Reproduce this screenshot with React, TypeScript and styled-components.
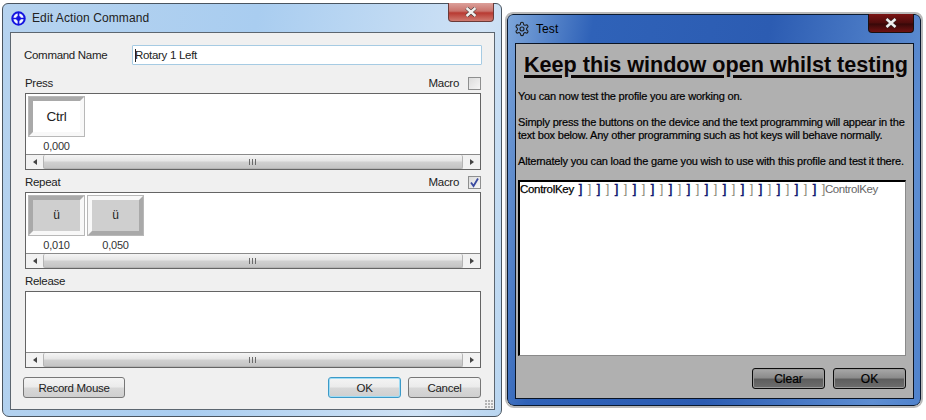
import React from "react";
import styled, { createGlobalStyle } from "styled-components";

const Global = createGlobalStyle`
  html, body { margin: 0; padding: 0; background: #fff; }
  body { width: 926px; height: 420px; overflow: hidden; font-family: "Liberation Sans", Arial, sans-serif; }
`;

const Page = styled.div`
  display: flex;
  align-items: flex-start;
  width: 926px;
  height: 420px;
  padding: 3px 0 0 2px;
  box-sizing: border-box;
`;

const Dialog = styled.div`
  width: 500px;
  height: 414px;
  box-sizing: border-box;
  display: flex;
  flex-direction: column;
  padding: 0 6px 6px 7px;
  border: 1px solid #4a5560;
  border-radius: 6px 6px 7px 7px;
  background: linear-gradient(100deg, #b6d3ef 0%, #a9cdf0 45%, #cfe2f5 85%, #b8d5f0 100%);
`;

const TitleBar = styled.div<{ $dark?: boolean }>`
  height: 28px;
  flex: none;
  display: flex;
  align-items: center;
  gap: 6px;
  position: relative;
  margin-left: ${(p) => (p.$dark ? "-1px" : "1px")};
  font-size: 12px;
  letter-spacing: 0.1px;
  color: ${(p) => (p.$dark ? "#000" : "#222")};
`;

const CloseBtn = styled.div<{ $dark?: boolean }>`
  position: absolute;
  right: ${(p) => (p.$dark ? "0" : "1px")};
  top: -1px;
  width: 46px;
  height: 19px;
  border: 1px solid ${(p) => (p.$dark ? "#1a1010" : "#6b3a38")};
  border-top: none;
  border-radius: 0 0 4px 4px;
  box-sizing: border-box;
  display: flex;
  align-items: center;
  justify-content: center;
  background: ${(p) =>
    p.$dark
      ? "linear-gradient(#7a1414 0%, #4e0c0c 50%, #360808 55%, #701212 100%)"
      : "linear-gradient(#dca09a 0%, #c9736c 45%, #b83a32 55%, #cf7a70 100%)"};
`;

const Panel = styled.div`
  flex: 1;
  display: flex;
  flex-direction: column;
  box-sizing: border-box;
  background: #f0f0f0;
  border: 1px solid #5c6670;
  padding: 12px 12px 0 13px;
  font-size: 11.5px;
  letter-spacing: -0.3px;
  color: #222;
`;

const NameRow = styled.div`
  display: flex;
  align-items: center;
  height: 20px;
`;

const NameLabel = styled.span`
  width: 108px;
  flex: none;
`;

const NameInput = styled.div`
  flex: 1;
  height: 20px;
  box-sizing: border-box;
  background: #fff;
  border: 1px solid #a6cbe3;
  border-radius: 1px;
  padding-left: 2px;
  display: flex;
  align-items: center;
`;

const Caret = styled.span`
  width: 1px;
  height: 13px;
  margin-right: -1px;
  background: #222;
  flex: none;
`;

const SectionHead = styled.div<{ $top: number }>`
  display: flex;
  align-items: center;
  justify-content: space-between;
  height: 16px;
  margin: ${(p) => p.$top}px 1px 0 1px;
`;

const MacroWrap = styled.div`
  display: flex;
  align-items: center;
  gap: 9px;
`;

const CheckBox = styled.div`
  width: 13px;
  height: 13px;
  box-sizing: border-box;
  border: 1px solid #8e8f8f;
  background: linear-gradient(135deg, #dcdcdc, #f6f6f6);
  display: flex;
  align-items: center;
  justify-content: center;
`;

const ListBox = styled.div`
  height: 77px;
  flex: none;
  box-sizing: border-box;
  margin: 2px 1px 0 1px;
  border: 1px solid #646464;
  background: #fff;
  display: flex;
  flex-direction: column;
`;

const Tiles = styled.div`
  flex: 1;
  display: flex;
  gap: 2px;
  padding: 2px 0 0 2px;
  min-height: 0;
`;

const TileCol = styled.div`
  display: flex;
  flex-direction: column;
  align-items: center;
  width: 57px;
  font-size: 11px;
  letter-spacing: -0.2px;
  line-height: 19px;
  color: #333;
`;

const Tile = styled.div<{ $gray?: boolean; $raised?: boolean }>`
  width: 57px;
  height: 41px;
  flex: none;
  box-sizing: border-box;
  border-style: solid;
  border-width: 5px;
  border-color: ${(p) =>
    p.$raised ? "#f8f8f8 #a9a9a9 #a9a9a9 #f8f8f8" : "#a9a9a9 #f8f8f8 #f8f8f8 #a9a9a9"};
  outline: 1px solid #b8b8b8;
  outline-offset: -1px;
  background: ${(p) => (p.$gray ? "#cfcfcf" : "#fff")};
  display: flex;
  align-items: center;
  justify-content: center;
  font-size: ${(p) => (p.$gray ? "12px" : "13.5px")};
  color: #222;
`;

const ScrollBar = styled.div`
  height: 14px;
  flex: none;
  display: flex;
  align-items: stretch;
  background: #f0f0f0;
  border-top: 1px solid #8a8a8a;
`;

const ScrollEnd = styled.div`
  width: 17px;
  flex: none;
  display: flex;
  align-items: center;
  justify-content: center;
  background: #f2f2f2;
`;

const Arrow = styled.span<{ $right?: boolean }>`
  width: 0;
  height: 0;
  border-top: 3.5px solid transparent;
  border-bottom: 3.5px solid transparent;
  ${(p) => (p.$right ? "border-left: 4px solid #444;" : "border-right: 4px solid #444;")}
`;

const Thumb = styled.div`
  flex: 1;
  box-sizing: border-box;
  border: 1px solid #b4b4b4;
  border-top: none;
  border-radius: 2px;
  background: linear-gradient(#f5f5f5 0%, #e6e6e6 45%, #d0d0d0 55%, #c4c4c4 100%);
  display: flex;
  align-items: center;
  justify-content: center;
`;

const Grip = styled.span`
  width: 9px;
  height: 6px;
  background: repeating-linear-gradient(90deg, #6a6a6a 0 1px, transparent 1px 3px);
`;

const Footer = styled.div`
  display: flex;
  align-items: center;
  margin: 9px 0 0 -1px;
  gap: 7px;
  padding-right: 1px;
`;

const Btn = styled.div<{ $w: number; $focus?: boolean }>`
  width: ${(p) => p.$w}px;
  height: 21px;
  box-sizing: border-box;
  border: 1px solid ${(p) => (p.$focus ? "#3c9ac8" : "#777")};
  border-radius: 3px;
  display: flex;
  align-items: center;
  justify-content: center;
  color: #222;
  background: linear-gradient(#f4f4f4 0%, #ebebeb 48%, #d8d8d8 52%, #cfcfcf 100%);
  ${(p) => p.$focus && "box-shadow: inset 0 0 0 1px #9fdcf5;"}
`;

const Spacer = styled.div`
  flex: 1;
`;

const Grabber = styled.div`
  position: absolute;
  right: 1px;
  bottom: 1px;
  width: 9px;
  height: 9px;
  background: radial-gradient(circle at 1px 1px, #b4b4b4 1px, transparent 1.2px) 0 0 / 3px 3px;
`;

const PanelWrap = styled.div`
  position: relative;
  flex: 1;
  display: flex;
  min-height: 0;
`;

const TestWindow = styled.div`
  width: 414px;
  height: 392px;
  margin: 11px 0 0 5px;
  box-sizing: border-box;
  display: flex;
  flex-direction: column;
  padding: 0 6px 6px 7px;
  border: 1px solid #0a1a30;
  border-radius: 6px 6px 7px 7px;
  outline: 2px solid #b9b9b9;
  background: linear-gradient(100deg, #7da6da 0%, #2f62b8 18%, #2c5cb2 55%, #5e8ed2 90%, #4f82cc 100%);
`;

const TestPanel = styled.div`
  flex: 1;
  display: flex;
  flex-direction: column;
  box-sizing: border-box;
  background: #b0b0b0;
  border: 1px solid #0a1424;
  padding: 6px 7px 7px 2px;
  color: #000;
`;

const Heading = styled.div`
  font-weight: bold;
  font-size: 21.6px;
  line-height: 29px;
  text-decoration: underline;
  text-decoration-thickness: 2.5px;
  text-underline-offset: 3px;
  color: #0a0505;
  white-space: nowrap;
  margin-left: 6px;
`;

const Para = styled.div<{ $top: number }>`
  font-size: 11px;
  line-height: 13px;
  letter-spacing: -0.2px;
  color: #000;
  white-space: nowrap;
  margin-top: ${(p) => p.$top}px;
  -webkit-text-stroke: 0.2px #000;
`;

const OutputBox = styled.div`
  height: 176px;
  flex: none;
  margin-top: 12px;
  box-sizing: border-box;
  border-style: solid;
  border-width: 2px 1px 1px 2px;
  border-color: #000 #8a8a8a #8a8a8a #000;
  background: #fff;
  font-size: 11.5px;
  line-height: 13px;
  display: flex;
  align-items: baseline;
  white-space: nowrap;
  letter-spacing: -0.3px;
`;

const KeyOn = styled.span`
  color: #000;
  -webkit-text-stroke: 0.25px #000;
  margin-right: 2px;
`;

const KeyOff = styled.span`
  color: #666;
  margin-left: -3px;
  letter-spacing: -0.4px;
`;

const Bracket = styled.span<{ $on: boolean }>`
  display: inline-block;
  width: 9px;
  text-align: center;
  font-size: 13px;
  color: ${(p) => (p.$on ? "#0a1470" : "#8a8a78")};
  -webkit-text-stroke: ${(p) => (p.$on ? "0.5px #0a1470" : "0")};
`;

const TestFooter = styled.div`
  display: flex;
  justify-content: flex-end;
  gap: 8px;
  margin-top: 12px;
`;

const DarkBtn = styled.div`
  width: 73px;
  height: 21px;
  box-sizing: border-box;
  border: 1px solid #0c0c0c;
  border-radius: 3px;
  box-shadow: inset 0 0 0 1px #9a9a9a;
  display: flex;
  align-items: center;
  justify-content: center;
  font-size: 12px;
  -webkit-text-stroke: 0.2px #000;
  color: #000;
  background: linear-gradient(#a8a8a8 0%, #8c8c8c 45%, #5e5e5e 55%, #6e6e6e 100%);
`;

const X = ({ stroke }: { stroke: string }) => (
  <svg width="12" height="10" viewBox="0 0 12 10">
    <path d="M1.5 1 L10.5 9 M10.5 1 L1.5 9" stroke="#333" strokeWidth="3.6" />
    <path d="M1.5 1 L10.5 9 M10.5 1 L1.5 9" stroke={stroke} strokeWidth="2.4" />
  </svg>
);

const AppIcon = () => (
  <svg width="15" height="15" viewBox="0 0 16 16">
    <circle cx="8" cy="8" r="6.6" fill="#f2f6ff" stroke="#1414e0" strokeWidth="2.2" />
    <path d="M8 2 V14 M2 8 H14" stroke="#1414e0" strokeWidth="1.8" />
    <circle cx="8" cy="8" r="2.6" fill="#1414e0" />
  </svg>
);

const GearIcon = () => (
  <svg width="16" height="16" viewBox="0 0 24 24" fill="none" stroke="#1c1c1c" strokeWidth="1.6">
    <path d="M12.2 2h-.4a2 2 0 0 0-2 2v.2a2 2 0 0 1-1 1.7l-.4.3a2 2 0 0 1-2 0l-.2-.1a2 2 0 0 0-2.7.7l-.2.4a2 2 0 0 0 .7 2.7l.2.1a2 2 0 0 1 1 1.7v.5a2 2 0 0 1-1 1.7l-.2.1a2 2 0 0 0-.7 2.7l.2.4a2 2 0 0 0 2.7.7l.2-.1a2 2 0 0 1 2 0l.4.3a2 2 0 0 1 1 1.7v.2a2 2 0 0 0 2 2h.4a2 2 0 0 0 2-2v-.2a2 2 0 0 1 1-1.7l.4-.3a2 2 0 0 1 2 0l.2.1a2 2 0 0 0 2.7-.7l.2-.4a2 2 0 0 0-.7-2.7l-.2-.1a2 2 0 0 1-1-1.7v-.5a2 2 0 0 1 1-1.7l.2-.1a2 2 0 0 0 .7-2.7l-.2-.4a2 2 0 0 0-2.7-.7l-.2.1a2 2 0 0 1-2 0l-.4-.3a2 2 0 0 1-1-1.7V4a2 2 0 0 0-2-2z" />
    <circle cx="12" cy="12" r="3" />
  </svg>
);

const Scroll = () => (
  <ScrollBar>
    <ScrollEnd><Arrow /></ScrollEnd>
    <Thumb><Grip /></Thumb>
    <ScrollEnd><Arrow $right /></ScrollEnd>
  </ScrollBar>
);

const Macro = ({ checked }: { checked?: boolean }) => (
  <MacroWrap>
    Macro
    <CheckBox>
      {checked && (
        <svg width="11" height="11" viewBox="0 0 11 11">
          <path d="M2 5.5 L4.5 9 L9 1.5" fill="none" stroke="#3a4aa0" strokeWidth="1.8" />
        </svg>
      )}
    </CheckBox>
  </MacroWrap>
);

const brackets = Array.from({ length: 28 }, (_, i) => i % 2 === 0);

export default function App() {
  return (
    <Page>
      <Global />
      <Dialog>
        <TitleBar>
          <AppIcon />
          Edit Action Command
          <CloseBtn><X stroke="#f4f0ee" /></CloseBtn>
        </TitleBar>
        <PanelWrap>
          <Panel>
            <NameRow>
              <NameLabel>Command Name</NameLabel>
              <NameInput><Caret />Rotary 1 Left</NameInput>
            </NameRow>
            <SectionHead $top={10}>Press<Macro /></SectionHead>
            <ListBox>
              <Tiles>
                <TileCol>
                  <Tile>Ctrl</Tile>
                  0,000
                </TileCol>
              </Tiles>
              <Scroll />
            </ListBox>
            <SectionHead $top={4}>Repeat<Macro checked /></SectionHead>
            <ListBox>
              <Tiles>
                <TileCol>
                  <Tile $gray>ü</Tile>
                  0,010
                </TileCol>
                <TileCol>
                  <Tile $gray $raised>ü</Tile>
                  0,050
                </TileCol>
              </Tiles>
              <Scroll />
            </ListBox>
            <SectionHead $top={4}>Release</SectionHead>
            <ListBox>
              <Tiles />
              <Scroll />
            </ListBox>
            <Footer>
              <Btn $w={102}>Record Mouse</Btn>
              <Spacer />
              <Btn $w={73} $focus>OK</Btn>
              <Btn $w={73}>Cancel</Btn>
            </Footer>
          </Panel>
          <Grabber />
        </PanelWrap>
      </Dialog>
      <TestWindow>
        <TitleBar $dark>
          <GearIcon />
          Test
          <CloseBtn $dark><X stroke="#f0f0f0" /></CloseBtn>
        </TitleBar>
        <TestPanel>
          <Heading>Keep this window open whilst testing</Heading>
          <Para $top={11}>You can now test the profile you are working on.</Para>
          <Para $top={13}>Simply press the buttons on the device and the text programming will appear in the<br />text box below. Any other programming such as hot keys will behave normally.</Para>
          <Para $top={13}>Alternately you can load the game you wish to use with this profile and test it there.</Para>
          <OutputBox>
            <KeyOn>ControlKey</KeyOn>
            {brackets.map((on, i) => <Bracket key={i} $on={on}>]</Bracket>)}
            <KeyOff>ControlKey</KeyOff>
          </OutputBox>
          <TestFooter>
            <DarkBtn>Clear</DarkBtn>
            <DarkBtn>OK</DarkBtn>
          </TestFooter>
        </TestPanel>
      </TestWindow>
    </Page>
  );
}
